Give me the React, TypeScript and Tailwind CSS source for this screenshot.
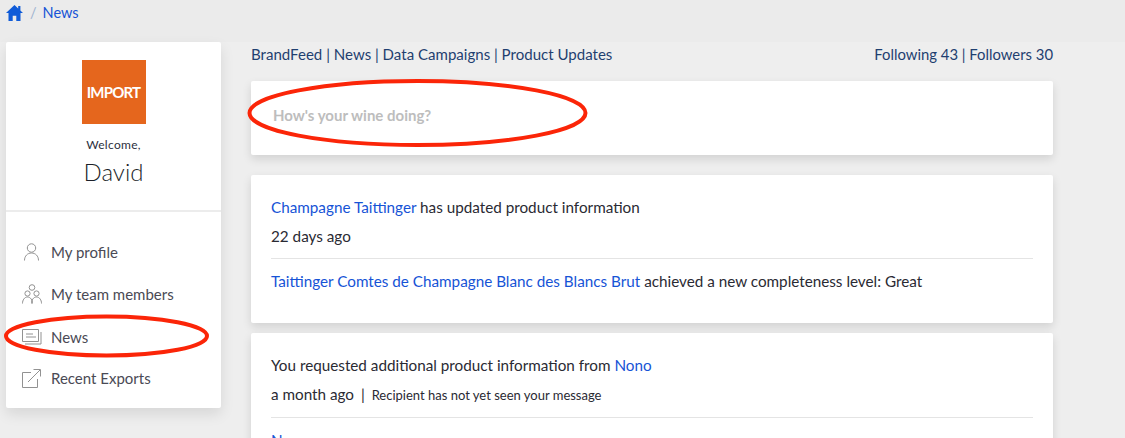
function HomeIcon() {
  return (
    <svg width="17" height="16" viewBox="0 0 17 16" fill="#0f5bd8">
      <path d="M8.5 0 0 8h2.5v8h4.2v-5.2h3.6V16h4.2V8H17l-2.6-2.4V1h-2.2v2.5z" />
    </svg>
  );
}

function ProfileIcon() {
  return (
    <svg width="15" height="18" viewBox="0 0 15 18" fill="none" stroke="#929292" strokeWidth="1">
      <circle cx="7.5" cy="5" r="4.2" />
      <path d="M.5 17.5c0-4.5 3-7.5 7-7.5s7 3 7 7.5" />
    </svg>
  );
}

function TeamIcon() {
  return (
    <svg width="20" height="20" viewBox="0 0 20 20" fill="none" stroke="#929292" strokeWidth="1">
      <circle cx="10" cy="3.5" r="2.8" />
      <circle cx="5.5" cy="9.5" r="2.6" />
      <circle cx="14.5" cy="9.5" r="2.6" />
      <path d="M.5 19.5c0-3.5 2-6.5 5-6.5s5 3 5 6.5" />
      <path d="M9.5 19.5c0-3.5 2-6.5 5-6.5s5 3 5 6.5" />
    </svg>
  );
}

function NewsIcon() {
  return (
    <svg width="20" height="16" viewBox="0 0 20 16" fill="none" stroke="#929292" strokeWidth="1">
      <path d="M.5.5h16v12H.5z" />
      <path d="M19 3v12H3" />
      <path d="M4 5h7M4 8h10" />
    </svg>
  );
}

function ExportIcon() {
  return (
    <svg width="19" height="19" viewBox="0 0 19 19" fill="none" stroke="#929292" strokeWidth="1">
      <path d="M9 3.5H.5v15h15V10" />
      <path d="M6 13 18 1M11.5.5h7v7" />
    </svg>
  );
}

const navItems = [
  { icon: ProfileIcon, label: "My profile", row: "h-[42px]" },
  { icon: TeamIcon, label: "My team members", row: "h-[42px]" },
  { icon: NewsIcon, label: "News", row: "h-[42px] pt-[2px]" },
  { icon: ExportIcon, label: "Recent Exports", row: "h-[42px]" },
];

function Sidebar() {
  return (
    <aside className="w-[215px] h-[366px] shrink-0 bg-white rounded-[2px] shadow-[0_6px_14px_rgba(0,0,0,0.1)]">
      <div className="h-[170px] flex flex-col items-center border-b-2 border-[#ececec] pt-[18px]">
        <div className="w-16 h-16 bg-[#e5661d] flex items-center justify-center text-white text-[15px] font-bold tracking-[-0.8px]">
          IMPORT
        </div>
        <div className="mt-[8px] text-[12px] leading-[26px] tracking-[0.3px] text-[#2c3040]">Welcome,</div>
        <div className="text-[24px] leading-[28px] font-light text-[#1c1f2a]">David</div>
      </div>
      <nav className="pt-[19px] flex flex-col">
        {navItems.map((item) => (
          <div key={item.label} className={`${item.row} flex items-center text-[15px] text-[#4a4a55]`}>
            <span className="w-[45px] pl-[15px] pr-[9px] flex justify-center shrink-0">
              <item.icon />
            </span>
            {item.label}
          </div>
        ))}
      </nav>
    </aside>
  );
}

function Link({ children }: { children: React.ReactNode }) {
  return <span className="text-[#1653d6]">{children}</span>;
}

function Card({ className, children }: { className: string; children: React.ReactNode }) {
  return (
    <div className={`bg-white rounded-[2px] shadow-[0_4px_10px_rgba(0,0,0,0.12)] px-5 ${className}`}>
      {children}
    </div>
  );
}

export default function App() {
  return (
    <div
      className="relative w-[1125px] h-[438px] overflow-hidden bg-[#eeeeee] text-[15.25px] text-[#2a2a33]"
      style={{ fontFamily: 'Lato, "Noto Sans", sans-serif' }}
    >
      <div className="h-[42px] bg-[#ebebeb] pl-[6px] pb-[16px] flex items-center text-[14.5px]">
        <HomeIcon />
        <span className="ml-[7px] mr-[6px] text-[#9fb4d0]">/</span>
        <span className="text-[#1653d6]">News</span>
      </div>

      <div className="flex pl-[6px] gap-[30px]">
        <Sidebar />
        <main className="w-[802px] flex flex-col">
          <div className="h-[39px] flex justify-between items-start pt-[1px] text-[#1f3f70] text-[15.06px]">
            <span>BrandFeed | News | Data Campaigns | Product Updates</span>
            <span className="text-[14.85px]">Following 43 | Followers 30</span>
          </div>
          <Card className="h-[74px] flex items-center pb-[6px] mb-5 text-[15px] text-[#bdbdbd] font-bold">
            <span className="pl-[2px]">How's your wine doing?</span>
          </Card>
          <Card className="h-[148px] pt-[20px] mb-[10px]">
            <p className="leading-[24px]">
              <Link>Champagne Taittinger</Link> has updated product information
            </p>
            <p className="leading-[24px] mt-[5px]">22 days ago</p>
            <div className="border-t border-[#e4e4e4] mt-[10px] pt-[10px] leading-[24px]">
              <Link>Taittinger Comtes de Champagne Blanc des Blancs Brut</Link> achieved a new completeness level: Great
            </div>
          </Card>
          <Card className="h-[148px] pt-[20px]">
            <p className="leading-[24px]">
              You requested additional product information from <Link>Nono</Link>
            </p>
            <p className="leading-[24px] mt-[5px]">
              a month ago <span className="mx-[3px]">|</span>{" "}
              <span className="text-[13px]">Recipient has not yet seen your message</span>
            </p>
            <div className="border-t border-[#e4e4e4] mt-[10px] pt-[10px] leading-[24px]">
              <Link>Nono</Link>
            </div>
          </Card>
        </main>
      </div>

      <svg className="absolute left-0 top-0 pointer-events-none" width="1125" height="438" fill="none" stroke="#fb2508" strokeWidth="4">
        <ellipse cx="417.5" cy="113" rx="168" ry="32" />
        <ellipse cx="106.5" cy="336" rx="100.5" ry="19.5" />
      </svg>
    </div>
  );
}
